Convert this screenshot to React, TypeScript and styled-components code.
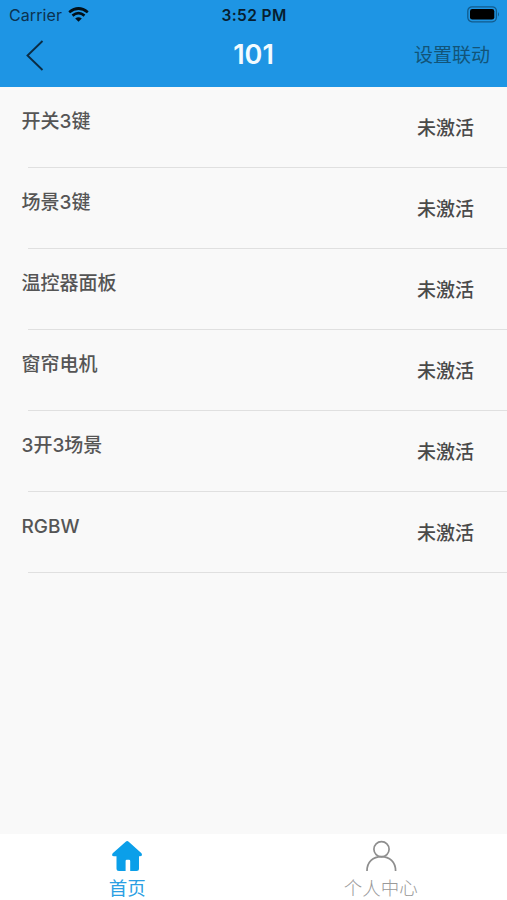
import React from "react";
import styled, { createGlobalStyle } from "styled-components";

const GlobalStyle = createGlobalStyle`
  body {
    margin: 0;
    background: #f9f9f9;
    font-family: Inter, "Noto Sans CJK SC", sans-serif;
  }
`;

const Screen = styled.div`
  display: flex;
  flex-direction: column;
  height: 900px;
  background: #f9f9f9;
  overflow: hidden;
`;

const Header = styled.header`
  flex: none;
  height: 87px;
  background: #1e95e4;
`;

const StatusBar = styled.div`
  display: grid;
  grid-template-columns: 1fr auto 1fr;
  align-items: center;
  height: 30px;
  padding: 0 8px 0 9px;
  box-sizing: border-box;
  color: #071e30;
`;

const Carrier = styled.div`
  display: flex;
  align-items: center;
  gap: 6px;
  font-size: 16px;
  line-height: 20px;
  letter-spacing: 0.1px;
  color: #0b3250;

  svg {
    margin-top: -2px;
  }
`;

const Clock = styled.div`
  padding-top: 1px;
  font-size: 15.5px;
  font-weight: 600;
  line-height: 20px;
  letter-spacing: 0.4px;
`;

const BatteryIcon = styled.svg`
  justify-self: end;
  margin: -2px -1px 0 0;
`;

const NavBar = styled.div`
  display: grid;
  grid-template-columns: 1fr auto 1fr;
  align-items: center;
  height: 50px;
  padding: 0 17px 0 25px;
`;

const BackButton = styled.button`
  display: flex;
  width: 20px;
  padding: 0;
  border: 0;
  background: none;
`;

const Title = styled.h1`
  margin: -1px 8px 0 0;
  font-size: 27px;
  font-weight: 600;
  line-height: 32px;
  color: #f2fbff;
`;

const LinkAction = styled.a`
  justify-self: end;
  padding-top: 2px;
  font-size: 19px;
  line-height: 28px;
  color: #125478;
`;

const List = styled.ul`
  flex: 1;
  margin: 0;
  padding: 0;
  list-style: none;
`;

const Row = styled.li`
  display: flex;
  justify-content: space-between;
  height: 81px;
  padding: 0 33px 0 21.5px;
  box-sizing: border-box;
  background: linear-gradient(#e0e0e0, #e0e0e0) 28px 100% / 100% 1px no-repeat;
  font-size: 19px;
  font-weight: 500;
  line-height: 28px;
`;

const Name = styled.span`
  padding-top: 21px;
  color: #555;
`;

const Status = styled.span`
  padding-top: 28px;
  color: #4a4a4a;
`;

const TabBar = styled.nav`
  display: grid;
  grid-template-columns: 1fr 1fr;
  flex: none;
  height: 66px;
  background: #fff;
`;

const Tab = styled.a<{ $active?: boolean }>`
  display: flex;
  flex-direction: column;
  align-items: center;
  padding: 6px 0 0 1px;
  font-size: 18.5px;
  line-height: 30px;
  color: ${(p) => (p.$active ? "#2b9fe3" : "#999")};
  font-weight: ${(p) => (p.$active ? 400 : 300)};

  svg {
    flex: none;
  }
`;

const devices = ["开关3键", "场景3键", "温控器面板", "窗帘电机", "3开3场景", "RGBW"];

function WifiIcon() {
  return (
    <svg width="21" height="15" viewBox="0 0 21 15">
      <g fill="none" stroke="#021019" strokeWidth="2.7">
        <path d="M1.2 5.2Q10.5 -2.2 19.8 5.2" />
        <path d="M4.5 8.6Q10.5 3.7 16.5 8.6" />
      </g>
      <path d="M7.2 11.5Q10.5 8.8 13.8 11.5L10.5 14.7Z" fill="#021019" />
    </svg>
  );
}

export default function App() {
  return (
    <Screen>
      <GlobalStyle />
      <Header>
        <StatusBar>
          <Carrier>
            Carrier
            <WifiIcon />
          </Carrier>
          <Clock>3:52 PM</Clock>
          <BatteryIcon width="33" height="17" viewBox="0 0 33 17">
            <rect x="0.8" y="0.8" width="28.6" height="15" rx="4.2" fill="none" stroke="#125b8c" strokeWidth="1.3" />
            <rect x="3" y="3" width="24.3" height="10.5" rx="2.3" fill="#000" />
            <path d="M31 6Q33 8.3 31 10.6Z" fill="#125b8c" />
          </BatteryIcon>
        </StatusBar>
        <NavBar>
          <BackButton aria-label="返回">
            <svg width="20" height="32" viewBox="0 0 20 32">
              <path d="M17.5 2L2.5 16.5L17.5 31" fill="none" stroke="#0b2c44" strokeWidth="1.9" />
            </svg>
          </BackButton>
          <Title>101</Title>
          <LinkAction>设置联动</LinkAction>
        </NavBar>
      </Header>
      <List>
        {devices.map((name) => (
          <Row key={name}>
            <Name>{name}</Name>
            <Status>未激活</Status>
          </Row>
        ))}
      </List>
      <TabBar>
        <Tab $active>
          <svg width="32" height="33" viewBox="0 0 32 33">
            <path
              d="M14.7 1.7Q16.2 0.3 17.7 1.7L30.5 13.2Q32 16.2 28.8 16.2H28V28.5Q28 31 25.5 31H19.2V21Q19.2 19.7 18 19.7H15.8Q14.6 19.7 14.6 21V31H8Q5.5 31 5.5 28.5V16.2H3Q0 16.2 1.7 13.2Z"
              fill="#0b9fe9"
            />
          </svg>
          首页
        </Tab>
        <Tab>
          <svg width="32" height="33" viewBox="0 0 32 33">
            <g fill="none" stroke="#8e8e8e" strokeWidth="1.7">
              <circle cx="16.5" cy="9.3" r="7.6" />
              <path d="M2 31C2 22 8 16.7 16.3 16.7S30.6 22 30.6 31" />
            </g>
          </svg>
          个人中心
        </Tab>
      </TabBar>
    </Screen>
  );
}
